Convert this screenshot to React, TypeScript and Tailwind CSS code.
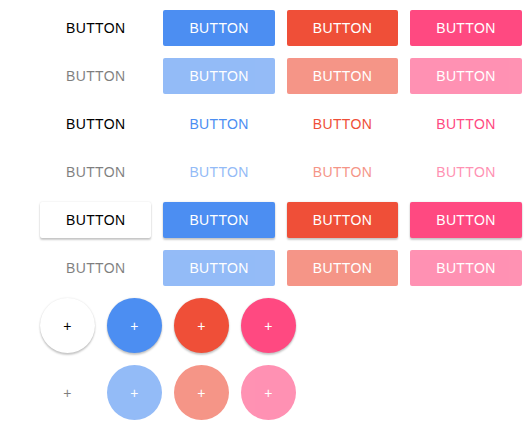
import React from 'react';
import { clsx } from 'clsx';

type Variant = 'solid' | 'flat' | 'raised' | 'fab';
type Tone = 'default' | 'primary' | 'danger' | 'accent';

const tones: Tone[] = ['default', 'primary', 'danger', 'accent'];

const filled: Record<Tone, string> = {
  default: 'bg-white text-black',
  primary: 'bg-[#4c8ef2] text-white',
  danger: 'bg-[#ef4f38] text-white',
  accent: 'bg-[#ff4981] text-white',
};

const flat: Record<Tone, string> = {
  default: 'text-black',
  primary: 'text-[#4c8ef2]',
  danger: 'text-[#ef4f38]',
  accent: 'text-[#ff4981]',
};

const elevated: Record<Variant, string> = {
  solid: '',
  flat: '',
  raised: 'shadow-[0_0_2px_rgba(0,0,0,0.12),0_2px_2px_rgba(0,0,0,0.2)]',
  fab: 'shadow-[0_0_2px_rgba(0,0,0,0.12),0_2px_2px_rgba(0,0,0,0.2)]',
};

const rows: { variant: Variant; disabled: boolean }[] = [
  { variant: 'solid', disabled: false },
  { variant: 'solid', disabled: true },
  { variant: 'flat', disabled: false },
  { variant: 'flat', disabled: true },
  { variant: 'raised', disabled: false },
  { variant: 'raised', disabled: true },
  { variant: 'fab', disabled: false },
  { variant: 'fab', disabled: true },
];

function Button({ variant, tone, disabled }: { variant: Variant; tone: Tone; disabled: boolean }) {
  const round = variant === 'fab';
  return (
    <button
      type="button"
      disabled={disabled}
      aria-label={round ? 'Add' : undefined}
      className={clsx(
        'shrink-0 text-center text-sm font-medium tracking-wide uppercase',
        round ? 'size-[55px] rounded-full' : 'h-9 rounded-xs px-[26px]',
        variant === 'flat' ? flat[tone] : filled[tone],
        disabled ? (tone === 'default' ? 'opacity-50' : 'opacity-60') : elevated[variant],
      )}
    >
      {round ? '+' : 'Button'}
    </button>
  );
}

export default function App() {
  return (
    <main className="flex flex-col gap-3 bg-white py-[10px] pl-10 font-['Liberation_Sans',Arial,sans-serif]">
      {rows.map(({ variant, disabled }) => (
        <div key={`${variant}-${disabled}`} className="flex gap-3">
          {tones.map((tone) => (
            <Button key={tone} variant={variant} tone={tone} disabled={disabled} />
          ))}
        </div>
      ))}
    </main>
  );
}
